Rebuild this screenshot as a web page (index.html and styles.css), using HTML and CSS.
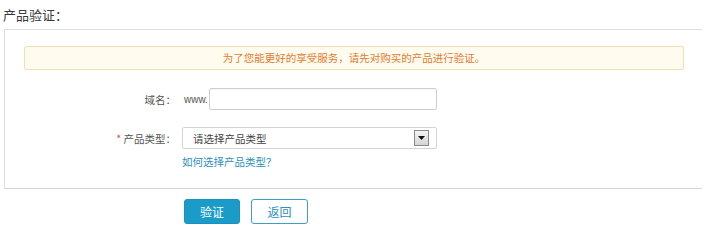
FILE: index.html
```html
<!DOCTYPE html>
<html lang="zh-CN">
<head>
<meta charset="utf-8">
<title>产品验证</title>
<link rel="stylesheet" href="styles.css">
</head>
<body>
<div class="title">产品验证：</div>
<div class="panel">
  <div class="notice">为了您能更好的享受服务，请先对购买的产品进行验证。</div>
  <div class="row row-domain">
    <label class="label">域名：</label>
    <span class="prefix">www.</span>
    <input class="input" type="text">
  </div>
  <div class="row row-type">
    <label class="label"><span class="star">*</span> 产品类型：</label>
    <div class="select">
      <span class="select-text">请选择产品类型</span>
      <span class="select-btn"><svg width="7" height="4" viewBox="0 0 7 4"><path d="M0 0H7L3.5 4Z" fill="#111"/></svg></span>
    </div>
  </div>
  <div class="row row-link">
    <span class="label"></span>
    <a class="help" href="#">如何选择产品类型？</a>
  </div>
</div>
<div class="actions">
  <button class="btn btn-primary" type="button">验证</button>
  <button class="btn btn-default" type="button">返回</button>
</div>
</body>
</html>
```

FILE: styles.css
```css
html, body {
  margin: 0;
  padding: 0;
  background: #fff;
}
body {
  width: 722px;
  height: 240px;
  font-family: "Noto Sans CJK SC", "Liberation Sans", sans-serif;
  font-size: 10.5px;
  color: #555;
  overflow: hidden;
  text-spacing-trim: space-all;
}
.title {
  height: 29px;
  line-height: 29px;
  padding-left: 3px;
  font-size: 13px;
  color: #3a3a3a;
}
.panel {
  margin-left: 4px;
  width: 698px;
  box-sizing: border-box;
  border-top: 1px solid #dedede;
  border-left: 1px solid #dedede;
  border-bottom: 1px solid #d6d6d6;
  padding: 16px 0 18px 0;
}
.notice {
  margin-left: 19px;
  width: 660px;
  height: 24px;
  box-sizing: border-box;
  border: 1px solid #f1e0b6;
  background: #fffbee;
  color: #e27b2e;
  text-align: center;
  line-height: 22px;
  border-radius: 2px;
}
.row {
  display: flex;
  align-items: center;
}
.label {
  width: 171px;
  text-align: right;
  color: #555;
  flex: none;
}
.row-domain {
  margin-top: 18px;
  height: 22px;
}
.prefix {
  margin-left: 8px;
  color: #555;
  font-family: "Liberation Sans", sans-serif;
  font-size: 10px;
}
.input {
  width: 228px;
  height: 22px;
  box-sizing: border-box;
  border: 1px solid #cfcfcf;
  border-radius: 2px;
  margin: 0 0 0 1px;
  padding: 0 4px;
  font: inherit;
  box-shadow: inset 0 1px 1px rgba(0,0,0,0.04);
}
.row-type {
  margin-top: 17px;
  height: 22px;
}
.star {
  color: #d9534f;
}
.select {
  margin-left: 6px;
  width: 255px;
  height: 22px;
  box-sizing: border-box;
  border: 1px solid #d4d4d4;
  border-radius: 2px;
  display: flex;
  align-items: center;
  justify-content: space-between;
  padding: 0 7px 0 10px;
  color: #444;
}
.select-btn {
  width: 15px;
  height: 16px;
  box-sizing: border-box;
  border: 1px solid #8a8a8a;
  background: linear-gradient(#f4f4f4, #d6d6d6);
  display: flex;
  align-items: center;
  justify-content: center;
}
.row-link {
  margin-top: 5px;
  height: 16px;
}
.help {
  margin-left: 6px;
  color: #2b90bf;
  text-decoration: none;
  line-height: 16px;
}
.actions {
  display: flex;
  gap: 11px;
  padding: 10px 0 0 184px;
}
.btn {
  width: 56px;
  height: 25px;
  box-sizing: border-box;
  border-radius: 3px;
  font-family: "Noto Sans CJK SC", "Liberation Sans", sans-serif;
  font-size: 12px;
  padding: 0;
  margin: 0;
  cursor: pointer;
}
.btn-primary {
  background: #1a9bc8;
  border: 1px solid #1791bd;
  color: #fff;
}
.btn-default {
  width: 57px;
  background: #fff;
  border: 1px solid #3c9fc7;
  color: #2b90bf;
}
```
